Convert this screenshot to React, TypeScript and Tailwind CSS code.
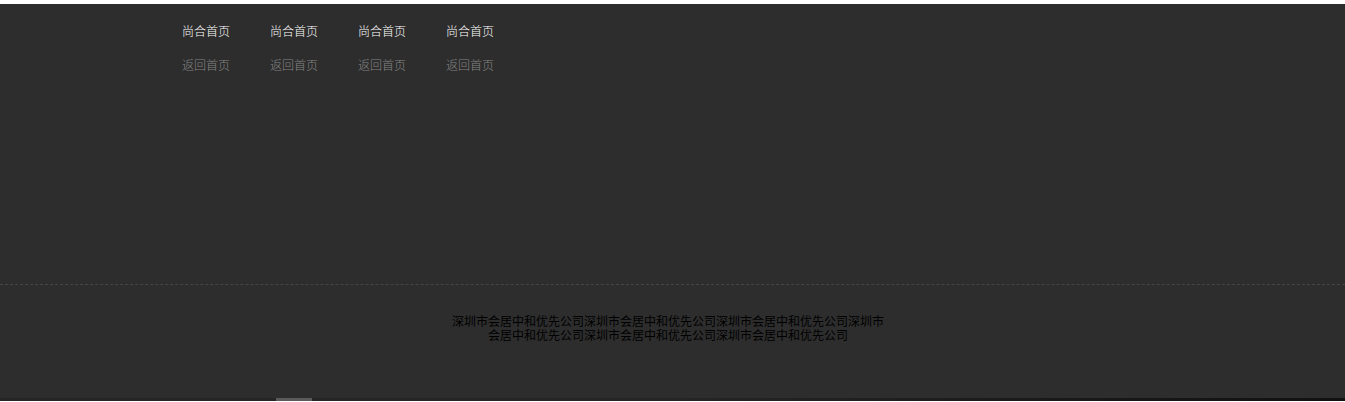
import React from "react";

const navItems = ["尚合首页", "尚合首页", "尚合首页", "尚合首页"];
const subItems = ["返回首页", "返回首页", "返回首页", "返回首页"];

const App: React.FC = () => {
  return (
    <div
      className="w-full bg-white pt-[4px]"
      style={{ fontFamily: '"Noto Sans CJK SC", "Noto Sans", sans-serif' }}
    >
      <div className="bg-[#2d2d2d]">
        {/* 顶部导航 */}
        <div className="h-[281px] border-b border-dashed border-[#454545] pl-[182px] pt-[17px]">
          <ul className="flex gap-[40px] text-[12px] font-light leading-[20px] text-white">
            {navItems.map((t, i) => (
              <li key={i} className="w-[48px] whitespace-nowrap">
                {t}
              </li>
            ))}
          </ul>
          <ul className="mt-[14px] flex gap-[40px] text-[12px] font-light leading-[20px] text-[#858585]">
            {subItems.map((t, i) => (
              <li key={i} className="w-[48px] whitespace-nowrap">
                {t}
              </li>
            ))}
          </ul>
        </div>

        {/* 版权信息 */}
        <div className="flex justify-center pr-[9px] pt-[29px] pb-[56px]">
          <p className="w-[440px] text-center text-[12px] leading-[14px] text-black">
            深圳市会居中和优先公司深圳市会居中和优先公司深圳市会居中和优先公司深圳市会居中和优先公司深圳市会居中和优先公司深圳市会居中和优先公司
          </p>
        </div>

        {/* 底部条 */}
        <div className="flex h-[3px] bg-gradient-to-r from-[#262626] via-[#252525] to-[#111111]">
          <div className="w-[276px]" />
          <div className="w-[36px] bg-[#5a5a5a]" />
        </div>
      </div>
    </div>
  );
};

export default App;
